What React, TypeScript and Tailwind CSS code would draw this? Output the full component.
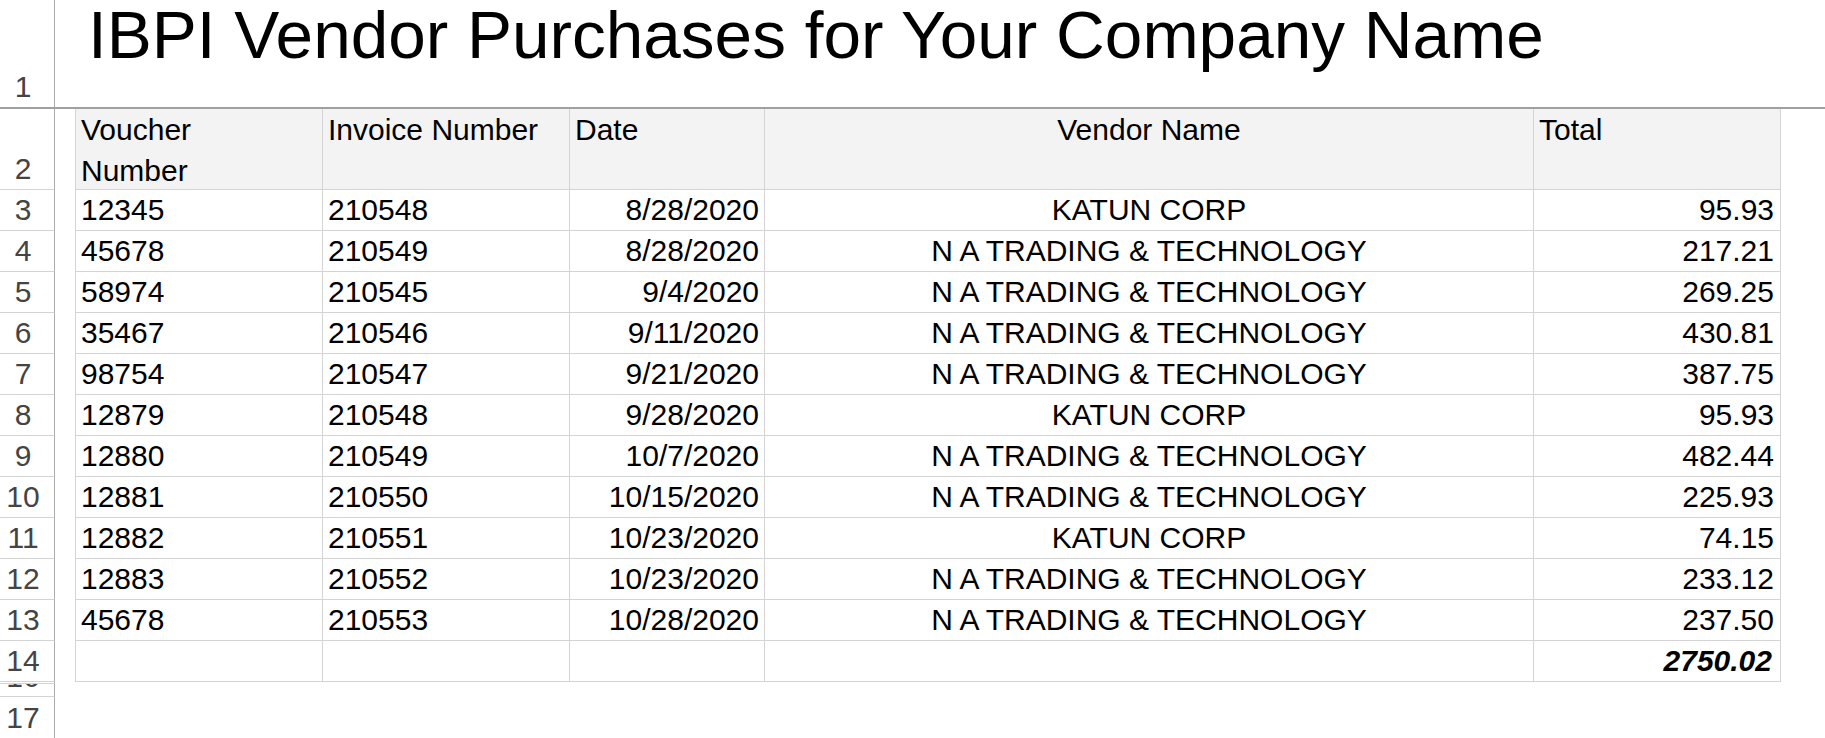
import React from "react";

const rows = [
  ["12345", "210548", "8/28/2020", "KATUN CORP", "95.93"],
  ["45678", "210549", "8/28/2020", "N A TRADING & TECHNOLOGY", "217.21"],
  ["58974", "210545", "9/4/2020", "N A TRADING & TECHNOLOGY", "269.25"],
  ["35467", "210546", "9/11/2020", "N A TRADING & TECHNOLOGY", "430.81"],
  ["98754", "210547", "9/21/2020", "N A TRADING & TECHNOLOGY", "387.75"],
  ["12879", "210548", "9/28/2020", "KATUN CORP", "95.93"],
  ["12880", "210549", "10/7/2020", "N A TRADING & TECHNOLOGY", "482.44"],
  ["12881", "210550", "10/15/2020", "N A TRADING & TECHNOLOGY", "225.93"],
  ["12882", "210551", "10/23/2020", "KATUN CORP", "74.15"],
  ["12883", "210552", "10/23/2020", "N A TRADING & TECHNOLOGY", "233.12"],
  ["45678", "210553", "10/28/2020", "N A TRADING & TECHNOLOGY", "237.50"],
];

function RowHead({ n, h }: { n: string; h: string }) {
  return (
    <div
      className={`w-[55px] shrink-0 ${h} border-r border-b border-r-[#ababab] border-b-[#d4d4d4] flex items-end justify-center pr-[8px] pb-[5px] text-[30px] leading-none text-[#444444] overflow-hidden`}
    >
      {n}
    </div>
  );
}

export default function App() {
  return (
    <div
      className="w-[1825px] h-[738px] bg-white text-black overflow-hidden"
      style={{ fontFamily: '"Liberation Sans", Arial, sans-serif' }}
    >
      {/* Row 1 */}
      <div className="flex h-[109px] border-b-2 border-[#a0a0a0]">
        <div className="w-[55px] shrink-0 border-r border-[#ababab] flex items-end justify-center pr-[8px] pb-[5px] text-[30px] leading-none text-[#444444]">
          1
        </div>
        <div className="pl-[33px] pt-[1px] text-[67.5px] leading-none whitespace-nowrap">
          IBPI Vendor Purchases for Your Company Name
        </div>
      </div>

      {/* Row 2 header */}
      <div className="flex h-[81px] text-[30px]">
        <RowHead n="2" h="h-[81px]" />
        <div className="w-[20px] shrink-0" />
        <div className="w-[248px] shrink-0 border-l border-r border-b border-[#d4d4d4] bg-[#f3f3f3] pl-[5px] leading-[41px]">
          Voucher
          <br />
          Number
        </div>
        <div className="w-[247px] shrink-0 border-r border-b border-[#d4d4d4] bg-[#f3f3f3] pl-[5px] leading-[41px] whitespace-nowrap">
          Invoice Number
        </div>
        <div className="w-[195px] shrink-0 border-r border-b border-[#d4d4d4] bg-[#f3f3f3] pl-[5px] leading-[41px]">
          Date
        </div>
        <div className="w-[769px] shrink-0 border-r border-b border-[#d4d4d4] bg-[#f3f3f3] text-center leading-[41px]">
          Vendor Name
        </div>
        <div className="w-[247px] shrink-0 border-r border-b border-[#d4d4d4] bg-[#f3f3f3] pl-[5px] leading-[41px]">
          Total
        </div>
      </div>

      {rows.map((r, i) => (
        <div key={i} className="flex h-[41px] text-[30px] leading-[39px]">
          <RowHead n={String(i + 3)} h="h-[41px]" />
          <div className="w-[20px] shrink-0" />
          <div className="w-[248px] shrink-0 border-l border-r border-b border-[#d4d4d4] pl-[5px]">
            {r[0]}
          </div>
          <div className="w-[247px] shrink-0 border-r border-b border-[#d4d4d4] pl-[5px]">
            {r[1]}
          </div>
          <div className="w-[195px] shrink-0 border-r border-b border-[#d4d4d4] pr-[5px] text-right">
            {r[2]}
          </div>
          <div className="w-[769px] shrink-0 border-r border-b border-[#d4d4d4] text-center whitespace-nowrap">
            {r[3]}
          </div>
          <div className="w-[247px] shrink-0 border-r border-b border-[#d4d4d4] pr-[6px] text-right">
            {r[4]}
          </div>
        </div>
      ))}

      {/* Row 14 total */}
      <div className="flex h-[41px] text-[30px] leading-[39px]">
        <RowHead n="14" h="h-[41px]" />
        <div className="w-[20px] shrink-0" />
        <div className="w-[248px] shrink-0 border-l border-r border-b border-[#d4d4d4]" />
        <div className="w-[247px] shrink-0 border-r border-b border-[#d4d4d4]" />
        <div className="w-[195px] shrink-0 border-r border-b border-[#d4d4d4]" />
        <div className="w-[769px] shrink-0 border-r border-b border-[#d4d4d4]" />
        <div className="w-[247px] shrink-0 border-r border-b border-[#d4d4d4] pr-[8px] text-right font-bold italic">
          2750.02
        </div>
      </div>

      {/* Hidden / partial rows */}
      <div className="flex h-[2px]">
        <div className="w-[55px] shrink-0 h-[2px] border-r border-b border-r-[#ababab] border-b-[#d4d4d4]" />
      </div>
      <div className="flex h-[13px]">
        <div className="w-[55px] shrink-0 h-[13px] border-r border-b border-r-[#ababab] border-b-[#d4d4d4] flex items-end justify-center pr-[8px] text-[30px] leading-none text-[#444444] overflow-hidden">
          <span className="block translate-y-[-4px]">16</span>
        </div>
      </div>
      <div className="flex h-[42px]">
        <RowHead n="17" h="h-[42px]" />
      </div>
    </div>
  );
}
